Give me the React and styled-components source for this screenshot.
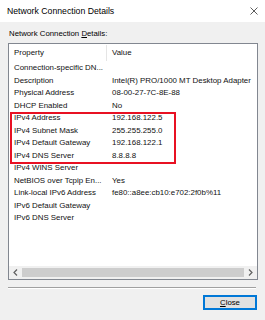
import React from 'react'
import styled, { createGlobalStyle } from 'styled-components'

const GlobalStyle = createGlobalStyle`
  html, body {
    margin: 0;
    padding: 0;
    background: #f0f0f0;
  }
  body {
    font-family: 'Liberation Sans', Arial, sans-serif;
    color: #000;
  }
`

const Window = styled.div`
  width: 265px;
  height: 320px;
  display: flex;
  flex-direction: column;
  background: #f0f0f0;
  overflow: hidden;
`

const TitleBar = styled.div`
  height: 22px;
  flex: none;
  background: #fff;
  display: flex;
  align-items: center;
  justify-content: space-between;
  padding: 0 7px 0 7px;
  font-size: 8.7px;
  color: #000;
`

const CloseX = styled.svg`
  width: 8px;
  height: 8px;
`

const Body = styled.div`
  flex: 1;
  display: flex;
  flex-direction: column;
  padding: 6px 7px 0 8px;
`

const Label = styled.div`
  height: 15px;
  font-size: 7.8px;
  line-height: 12px;
  padding-left: 1px;
`

const ListBox = styled.div`
  position: relative;
  height: 235px;
  border: 1px solid #828790;
  background: #fff;
  display: flex;
  flex-direction: column;
  font-size: 7.9px;
  color: #111;
`

const Rows = styled.div`
  flex: 1;
`

const HeaderRow = styled.div`
  display: grid;
  grid-template-columns: 98px 1fr;
  height: 18px;
  align-items: center;
`

const HeaderCell = styled.div`
  padding-left: 5px;
  height: 16px;
  line-height: 16px;
  border-right: ${({ last }) => (last ? 'none' : '1px solid #e5e5e5')};
`

const Row = styled.div`
  display: grid;
  grid-template-columns: 98px 1fr;
  height: 12.5px;
  line-height: 12.5px;
  white-space: nowrap;
`

const Cell = styled.div`
  padding-left: 5px;
  overflow: hidden;
`

const Highlight = styled.div`
  position: absolute;
  left: 1px;
  top: 68px;
  width: 162px;
  height: 48px;
  border: 2px solid #e81123;
  pointer-events: none;
`

const ScrollBar = styled.div`
  height: 13px;
  display: flex;
  align-items: center;
  background: #f0f0f0;
`

const Arrow = styled.div`
  width: 13px;
  height: 13px;
  display: flex;
  align-items: center;
  justify-content: center;
`

const Track = styled.div`
  flex: 1;
  height: 9px;
  background: #cdcdcd;
`

const Separator = styled.div`
  margin: 7px 2px 0 0;
  height: 1px;
  background: #a0a0a0;
  border-bottom: 1px solid #fff;
`

const Footer = styled.div`
  display: flex;
  justify-content: flex-end;
  margin-top: 6px;
  padding-right: 1px;
`

const Button = styled.button`
  width: 54px;
  height: 15px;
  padding: 0;
  border: 1px solid #0078d7;
  background: #e1e1e1;
  font-family: 'Liberation Sans', Arial, sans-serif;
  font-size: 7.8px;
  color: #000;
  box-shadow: inset 0 0 0 1px #0078d7;

  u {
    text-decoration: underline;
  }
`

const rows = [
  ['Connection-specific DN...', ''],
  ['Description', 'Intel(R) PRO/1000 MT Desktop Adapter'],
  ['Physical Address', '08-00-27-7C-8E-88'],
  ['DHCP Enabled', 'No'],
  ['IPv4 Address', '192.168.122.5'],
  ['IPv4 Subnet Mask', '255.255.255.0'],
  ['IPv4 Default Gateway', '192.168.122.1'],
  ['IPv4 DNS Server', '8.8.8.8'],
  ['IPv4 WINS Server', ''],
  ['NetBIOS over Tcpip En...', 'Yes'],
  ['Link-local IPv6 Address', 'fe80::a8ee:cb10:e702:2f0b%11'],
  ['IPv6 Default Gateway', ''],
  ['IPv6 DNS Server', ''],
]

const App = () => {
  return (
    <>
      <GlobalStyle />
      <Window>
        <TitleBar>
          <span>Network Connection Details</span>
          <CloseX viewBox='0 0 8 8'>
            <path d='M0.5 0.5 L7.5 7.5 M7.5 0.5 L0.5 7.5' stroke='#333' strokeWidth='0.8' fill='none' />
          </CloseX>
        </TitleBar>
        <Body>
          <Label>
            Network Connection <u>D</u>etails:
          </Label>
          <ListBox>
            <Rows>
              <HeaderRow>
                <HeaderCell>Property</HeaderCell>
                <HeaderCell last>Value</HeaderCell>
              </HeaderRow>
              {rows.map(([prop, val]) => (
                <Row key={prop}>
                  <Cell>{prop}</Cell>
                  <Cell>{val}</Cell>
                </Row>
              ))}
            </Rows>
            <ScrollBar>
              <Arrow>
                <svg width='5' height='7' viewBox='0 0 5 7'>
                  <path d='M4 0.5 L1 3.5 L4 6.5' stroke='#606060' strokeWidth='1.2' fill='none' />
                </svg>
              </Arrow>
              <Track />
              <Arrow>
                <svg width='5' height='7' viewBox='0 0 5 7'>
                  <path d='M1 0.5 L4 3.5 L1 6.5' stroke='#606060' strokeWidth='1.2' fill='none' />
                </svg>
              </Arrow>
            </ScrollBar>
            <Highlight />
          </ListBox>
          <Separator />
          <Footer>
            <Button>
              <u>C</u>lose
            </Button>
          </Footer>
        </Body>
      </Window>
    </>
  )
}

export default App
